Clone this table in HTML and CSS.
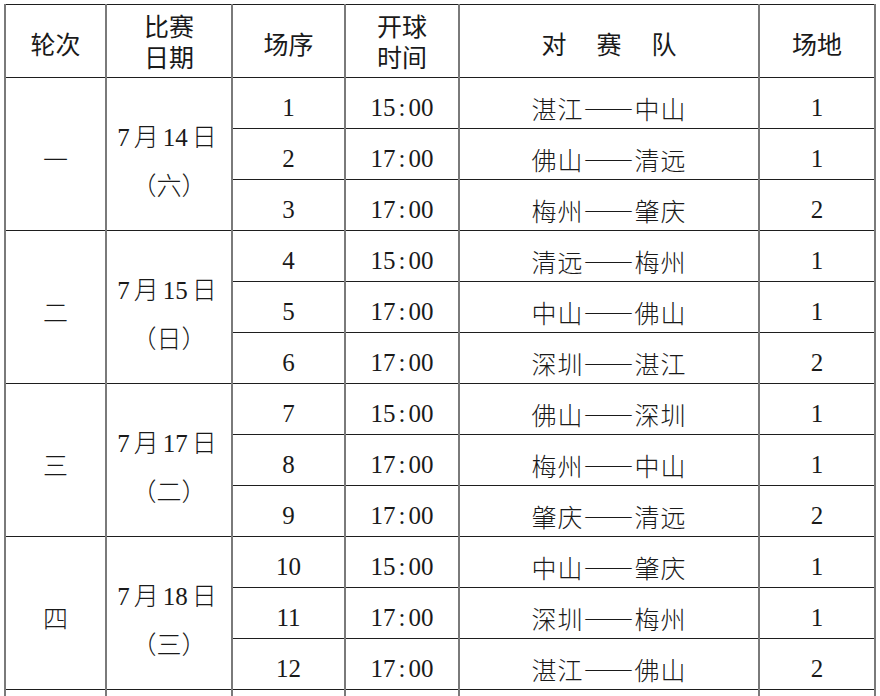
FILE: index.html
```html
<!DOCTYPE html>
<html lang="zh-CN">
<head>
<meta charset="utf-8">
<title>赛程表</title>
<link rel="stylesheet" href="styles.css">
</head>
<body>
<table class="sched">
  <colgroup>
    <col class="c1"><col class="c2"><col class="c3"><col class="c4"><col class="c5"><col class="c6">
  </colgroup>
  <thead>
    <tr class="head">
      <th>轮次</th>
      <th><div class="two">比赛<br>日期</div></th>
      <th>场序</th>
      <th><div class="two">开球<br>时间</div></th>
      <th><span class="spread">对</span><span class="spread">赛</span><span>队</span></th>
      <th>场地</th>
    </tr>
  </thead>
  <tbody>
    <tr>
      <td rowspan="3" class="round">一</td>
      <td rowspan="3" class="date"><div>7<span class="g">月</span>14<span class="g">日</span></div><div>（六）</div></td>
      <td>1</td><td>15<span class="c">:</span>00</td><td class="team">湛江——中山</td><td>1</td>
    </tr>
    <tr><td>2</td><td>17<span class="c">:</span>00</td><td class="team">佛山——清远</td><td>1</td></tr>
    <tr><td>3</td><td>17<span class="c">:</span>00</td><td class="team">梅州——肇庆</td><td>2</td></tr>

    <tr>
      <td rowspan="3" class="round">二</td>
      <td rowspan="3" class="date"><div>7<span class="g">月</span>15<span class="g">日</span></div><div>（日）</div></td>
      <td>4</td><td>15<span class="c">:</span>00</td><td class="team">清远——梅州</td><td>1</td>
    </tr>
    <tr><td>5</td><td>17<span class="c">:</span>00</td><td class="team">中山——佛山</td><td>1</td></tr>
    <tr><td>6</td><td>17<span class="c">:</span>00</td><td class="team">深圳——湛江</td><td>2</td></tr>

    <tr>
      <td rowspan="3" class="round">三</td>
      <td rowspan="3" class="date"><div>7<span class="g">月</span>17<span class="g">日</span></div><div>（二）</div></td>
      <td>7</td><td>15<span class="c">:</span>00</td><td class="team">佛山——深圳</td><td>1</td>
    </tr>
    <tr><td>8</td><td>17<span class="c">:</span>00</td><td class="team">梅州——中山</td><td>1</td></tr>
    <tr><td>9</td><td>17<span class="c">:</span>00</td><td class="team">肇庆——清远</td><td>2</td></tr>

    <tr>
      <td rowspan="3" class="round">四</td>
      <td rowspan="3" class="date"><div>7<span class="g">月</span>18<span class="g">日</span></div><div>（三）</div></td>
      <td>10</td><td>15<span class="c">:</span>00</td><td class="team">中山——肇庆</td><td>1</td>
    </tr>
    <tr><td>11</td><td>17<span class="c">:</span>00</td><td class="team">深圳——梅州</td><td>1</td></tr>
    <tr><td>12</td><td>17<span class="c">:</span>00</td><td class="team">湛江——佛山</td><td>2</td></tr>

    <tr class="cut"><td></td><td></td><td></td><td></td><td></td><td></td></tr>
  </tbody>
</table>
</body>
</html>
```
FILE: styles.css
```css
html, body {
  margin: 0;
  padding: 0;
  background: #ffffff;
}
body {
  padding: 4px 0 0 4px;
  overflow: hidden;
  height: 696px;
  box-sizing: border-box;
}
.sched {
  border-collapse: collapse;
  table-layout: fixed;
  width: 872px;
  color: #1a1a1a;
  font-family: "Liberation Serif", "Noto Sans CJK SC", serif;
  font-size: 25px;
  font-weight: 300;
}
.c1 { width: 101px; }
.c2 { width: 126px; }
.c3 { width: 113px; }
.c4 { width: 114px; }
.c5 { width: 300px; }
.c6 { width: 116px; }

.sched th, .sched td {
  border-top: 1px solid #1e1e1e;
  border-bottom: 1px solid #1e1e1e;
  border-left: 2px solid #7a7a7a;
  border-right: 2px solid #7a7a7a;
  padding: 0;
  text-align: center;
  vertical-align: middle;
}
.head {
  height: 73px;
}
.head th {
  font-family: "Noto Sans CJK SC", sans-serif;
  font-weight: 400;
  font-size: 25px;
  line-height: 36px;
  color: #1a1a1a;
  padding-top: 4px;
}
.two {
  line-height: 31px;
  padding-bottom: 4px;
}
.spread {
  margin-right: 30px;
}
.sched tbody tr {
  height: 51px;
}
.sched tbody td {
  padding-top: 10px;
  line-height: 30px;
}
.team, .round, .g {
  font-family: "Noto Sans CJK SC", sans-serif;
  font-weight: 300;
}
.team {
  letter-spacing: 1px;
}
.c {
  margin: 0 3px;
}
.g {
  margin: 0 4px;
}
.sched tbody td.date {
  padding-top: 14px;
  line-height: 51px;
}
.date div {
  height: 51px;
}
.sched tbody td.round {
  padding-top: 8px;
}
.sched tbody tr.cut {
  height: 30px;
}
```
